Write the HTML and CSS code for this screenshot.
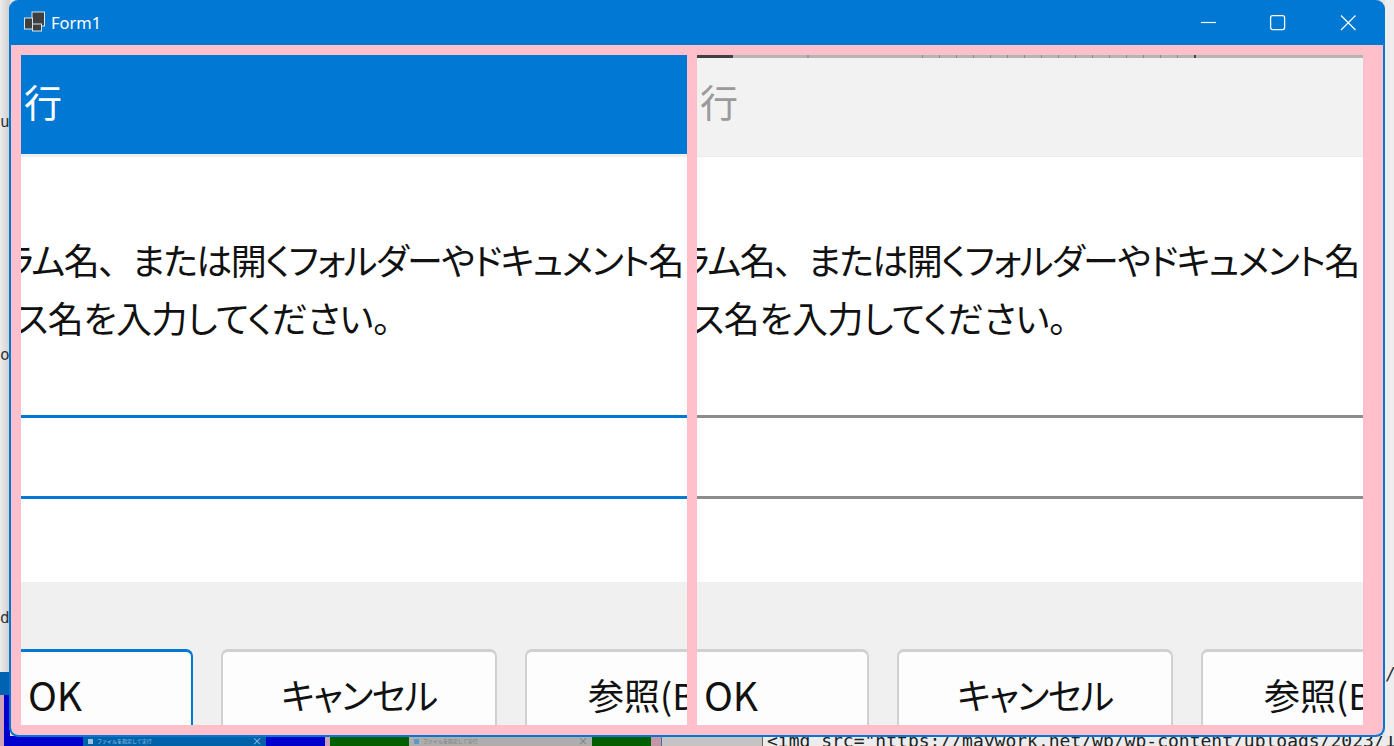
FILE: index.html
```html
<!DOCTYPE html>
<html lang="ja">
<head>
<meta charset="utf-8">
<title>Form1</title>
<link rel="stylesheet" href="styles.css">
</head>
<body>
<div class="desktop">
  <div class="desk-main">
    <div class="left-strip">
      <div class="left-letters"><span class="letter-u">u</span><span class="letter-o">o</span><span class="letter-d">d</span></div>
      <div class="left-task"></div>
      <div class="left-under"></div>
    </div>
    <div class="right-strip"><span class="slash">/</span></div>
  </div>
  <div class="desk-bottom">
    <div class="seg seg-pink-a"></div>
    <div class="seg seg-blue-a"></div>
    <div class="seg seg-tab seg-tab-blue"><i class="tab-icon"></i><span class="tab-label">ファイルを指定して実行</span><span class="tab-close">×</span></div>
    <div class="seg seg-blue-b"></div>
    <div class="seg seg-pink-b"></div>
    <div class="seg seg-green-a"></div>
    <div class="seg seg-tab seg-tab-gray"><i class="tab-icon"></i><span class="tab-label">ファイルを指定して実行</span><span class="tab-close">×</span></div>
    <div class="seg seg-green-b"></div>
    <div class="seg seg-pink-c"></div>
    <div class="seg seg-gray"></div>
    <div class="seg seg-code">&lt;img src="https://maywork.net/wp/wp-content/uploads/2023/1</div>
  </div>
</div>

<div class="window">
  <header class="titlebar">
    <svg class="app-icon" width="22" height="22" viewBox="0 0 22 22" aria-hidden="true">
      <rect x="9" y="1" width="12.5" height="14" fill="#3f3f3f" stroke="#d8e6f3"/>
      <rect x="1.5" y="7" width="8" height="11" fill="#3f3f3f" stroke="#d8e6f3"/>
      <rect x="9.5" y="13" width="9" height="7" fill="#3f3f3f" stroke="#d8e6f3"/>
    </svg>
    <span class="title-text">Form1</span>
    <div class="controls">
      <svg class="control" width="70" height="45" viewBox="0 0 70 45" aria-hidden="true"><path d="M28 22.5H43" stroke="#fff" stroke-width="1.2"/></svg>
      <svg class="control" width="70" height="45" viewBox="0 0 70 45" aria-hidden="true"><rect x="27.6" y="15.6" width="14" height="14" rx="2" fill="none" stroke="#fff" stroke-width="1.3"/></svg>
      <svg class="control" width="70" height="45" viewBox="0 0 70 45" aria-hidden="true"><path d="M28 15.5L42.5 30M42.5 15.5L28 30" stroke="#fff" stroke-width="1.2"/></svg>
    </div>
  </header>
  <main class="client">
    <section class="pane pane-active">
      <div class="pane-head"><span class="head-text">行</span></div>
      <div class="pane-body">
        <p class="message"><span class="line line-one">ラム名<span class="comma">、</span>または開くフォルダーやドキュメント名</span><span class="line line-two">ス名を入力してください。</span></p>
        <div class="input-box"></div>
      </div>
      <div class="pane-foot">
        <button class="btn btn-ok btn-default">OK</button>
        <button class="btn btn-cancel">キャンセル</button>
        <button class="btn">参照(B)...</button>
      </div>
    </section>
    <section class="pane pane-inactive">
      <div class="strip"></div>
      <div class="pane-head"><span class="head-text">行</span></div>
      <div class="pane-body">
        <p class="message"><span class="line line-one">ラム名<span class="comma">、</span>または開くフォルダーやドキュメント名</span><span class="line line-two">ス名を入力してください。</span></p>
        <div class="input-box"></div>
      </div>
      <div class="pane-foot">
        <button class="btn btn-ok">OK</button>
        <button class="btn btn-cancel">キャンセル</button>
        <button class="btn">参照(B)...</button>
      </div>
    </section>
  </main>
</div>
</body>
</html>
```
FILE: styles.css
```css
* { box-sizing: border-box; }
html, body { margin: 0; height: 100%; overflow: hidden; }
body {
  position: relative;
  width: 1394px;
  height: 746px;
  background: #e4e4e4;
  font-family: "Noto Sans CJK JP", "Noto Sans", sans-serif;
}

/* Desktop behind the window */
.desktop { display: flex; flex-direction: column; height: 746px; }
.desk-main { flex: 1; display: flex; justify-content: space-between; min-height: 0; }
.left-strip { width: 10px; display: flex; flex-direction: column; background: linear-gradient(90deg, #ececec, #cfcfcf); }
.left-letters {
  flex: 1;
  display: flex;
  flex-direction: column;
  padding-top: 110px;
  overflow: hidden;
  font: 16px/24px "DejaVu Sans Mono", monospace;
  color: #333;
}
.left-letters span { display: block; line-height: 24px; }
.letter-o { margin-top: 209px; }
.letter-d { margin-top: 239px; }
.left-task { height: 23px; background: #0063b1; }
.left-under { height: 41px; background: linear-gradient(90deg, #cfa3b5 0 4px, #0000cc 4px); }
.right-strip { width: 9px; background: #eeeeee; display: flex; flex-direction: column; justify-content: flex-end; }
.slash { font: 18px/24px "DejaVu Sans Mono", monospace; color: #333; margin-bottom: 50px; }

.desk-bottom { display: flex; height: 10px; overflow: hidden; font-size: 5px; line-height: 10px; }
.seg { flex: none; height: 10px; }
.seg-pink-a { width: 4px; background: #cfa3b5; }
.seg-blue-a { width: 79px; background: #0000cc; }
.seg-tab { display: flex; align-items: center; padding: 0 4px 0 5px; white-space: nowrap; }
.tab-icon { flex: none; width: 5px; height: 5px; margin-right: 4px; }
.tab-label { flex: 1; }
.tab-close { flex: none; font-size: 10px; }
.seg-tab-blue { width: 183px; background: #0060a8; color: #a8cae6; }
.seg-tab-blue .tab-icon { background: #9cc0e0; }
.seg-blue-b { width: 59px; background: #0000cc; }
.seg-pink-b { width: 5px; background: #cfa3b5; }
.seg-green-a { width: 79px; background: #006000; }
.seg-tab-gray { width: 183px; background: #adadad; color: #777; }
.seg-tab-gray .tab-icon { background: #5a9ac8; }
.seg-green-b { width: 59px; background: #006000; }
.seg-pink-c { width: 10px; background: #c497a6; }
.seg-gray { width: 102px; background: #c4c4c4; border-left: 1px solid #4a6ea0; border-right: 1px solid #666; }
.seg-code { flex: 1; background: #ececec; color: #222; white-space: nowrap; overflow: hidden; padding-left: 4px; font: 18px/10px "DejaVu Sans Mono", monospace; }

/* The window */
.window {
  position: absolute;
  left: 9px;
  top: 0;
  width: 1376px;
  height: 737px;
  display: flex;
  flex-direction: column;
  background: #0078d4;
  border: solid #0078d4;
  border-width: 0 2px 2px;
  border-radius: 9px;
  overflow: hidden;
}
.titlebar { flex: none; height: 45px; display: flex; align-items: center; color: #fff; padding-left: 12px; }
.app-icon { flex: none; margin-bottom: 2px; }
.title-text { margin-left: 6px; font: 16.5px "Noto Sans", sans-serif; }
.controls { margin-left: auto; display: flex; }
.control { display: block; flex: none; }

.client {
  flex: 1;
  min-height: 0;
  display: flex;
  gap: 10px;
  padding: 10px 20px 10px 10px;
  background: #ffc0cb;
  border-bottom-left-radius: 7px;
  border-bottom-right-radius: 7px;
}

/* Panes */
.pane { flex: 1; min-width: 0; display: flex; flex-direction: column; overflow: hidden; background: #fff; }
.pane-head {
  flex: none;
  display: flex;
  align-items: center;
  padding-left: 3px;
  font-size: 38px;
  font-weight: 400;
  line-height: 50px;
}
.pane-active .pane-head { height: 102px; padding-bottom: 8px; background: #0078d4; color: #fff; border-bottom: 3px solid #f0f0f0; }
.pane-inactive .pane-head { height: 99px; padding-bottom: 13px; background: #f2f2f2; color: #9a9a9a; border-bottom: 1px solid #ececec; }
.strip {
  flex: none;
  height: 3px;
  background:
    linear-gradient(90deg, #404040 0 36px, transparent 36px),
    linear-gradient(90deg, transparent 110px, #999 110px 112px, transparent 112px),
    linear-gradient(90deg, transparent 497px, #444 497px 499px, transparent 499px),
    repeating-linear-gradient(90deg, #8a8a8a 0 1px, transparent 1px 17px) 225px 0 / 270px 100% no-repeat,
    #b4b6b4;
}

.pane-body { flex: none; height: 425px; background: #fff; display: flex; flex-direction: column; padding-top: 73px; }
.message { margin: 0; font-size: 36px; line-height: 58px; color: #111; font-feature-settings: "palt"; font-weight: 400; }
.line { display: block; white-space: nowrap; }
.line-one { margin-left: -18px; letter-spacing: -1.5px; }
.comma { margin-right: 17px; }
.line-two { margin-left: -5px; letter-spacing: -0.5px; }
.input-box { margin-top: 69px; height: 84px; flex: none; border-top: 3px solid; border-bottom: 3px solid; }
.pane-active .input-box { border-color: #0078d4; }
.pane-inactive .input-box { border-color: #8c8c8c; }

.pane-foot { flex: 1; min-height: 0; display: flex; gap: 28px; padding-top: 67px; margin-left: -104px; background: #f0f0f0; }
.btn {
  flex: none;
  width: 276px;
  height: 96px;
  padding: 0 0 8px;
  background: #fdfdfd;
  color: #111;
  border: 2px solid #d0d0d0;
  border-top-width: 3px;
  border-radius: 7px;
  font-family: inherit;
  font-size: 36px;
  font-feature-settings: "palt";
  white-space: nowrap;
}
.btn-ok { font-size: 39px; }
.btn-cancel { letter-spacing: -1.5px; }
.btn-default { border-color: #0078d4; }
```
